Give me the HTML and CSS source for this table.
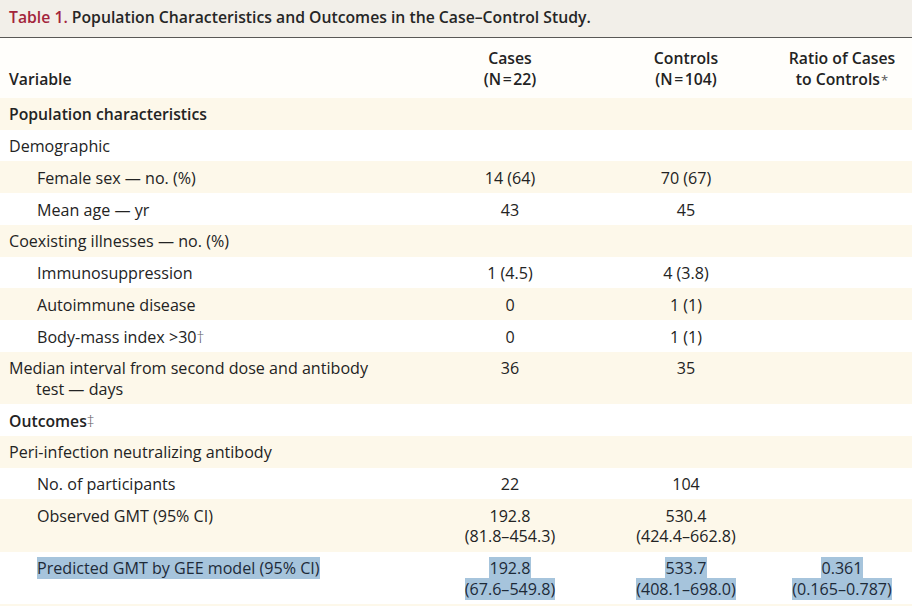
FILE: index.html
```html
<!DOCTYPE html>
<html lang="en">
<head>
<meta charset="utf-8">
<title>Table 1</title>
<link rel="stylesheet" href="styles.css">
</head>
<body>
<div class="page">
  <div class="title-bar"><span class="tnum">Table 1.</span> Population Characteristics and Outcomes in the Case–Control Study.</div>
  <table class="data">
    <colgroup>
      <col class="c-var"><col class="c-cases"><col class="c-ctrl"><col class="c-ratio">
    </colgroup>
    <thead>
      <tr>
        <th class="var">Variable</th>
        <th>Cases<br>(N&#8202;=&#8202;22)</th>
        <th>Controls<br>(N&#8202;=&#8202;104)</th>
        <th>Ratio of Cases<br>to Controls<span class="fn">*</span></th>
      </tr>
    </thead>
    <tbody>
      <tr class="cream"><td class="var l1 b">Population characteristics</td><td></td><td></td><td></td></tr>
      <tr><td class="var l1">Demographic</td><td></td><td></td><td></td></tr>
      <tr class="cream"><td class="var l2">Female sex — no. (%)</td><td>14 (64)</td><td>70 (67)</td><td></td></tr>
      <tr><td class="var l2">Mean age — yr</td><td>43</td><td>45</td><td></td></tr>
      <tr class="cream"><td class="var l1">Coexisting illnesses — no. (%)</td><td></td><td></td><td></td></tr>
      <tr><td class="var l2">Immunosuppression</td><td>1 (4.5)</td><td>4 (3.8)</td><td></td></tr>
      <tr class="cream"><td class="var l2">Autoimmune disease</td><td>0</td><td>1 (1)</td><td></td></tr>
      <tr><td class="var l2">Body-mass index &gt;30<span class="fn-s">†</span></td><td>0</td><td>1 (1)</td><td></td></tr>
      <tr class="cream"><td class="var l1 hang">Median interval from second dose and antibody<br>test — days</td><td>36</td><td>35</td><td></td></tr>
      <tr><td class="var l1 b">Outcomes<span class="fn-s">‡</span></td><td></td><td></td><td></td></tr>
      <tr class="cream"><td class="var l1">Peri-infection neutralizing antibody</td><td></td><td></td><td></td></tr>
      <tr><td class="var l2">No. of participants</td><td>22</td><td>104</td><td></td></tr>
      <tr class="cream"><td class="var l2">Observed GMT (95% CI)</td><td>192.8<br>(81.8–454.3)</td><td>530.4<br>(424.4–662.8)</td><td></td></tr>
      <tr><td class="var l2"><span class="sel">Predicted GMT by GEE model (95% CI)</span></td><td><span class="sel">192.8<br>(67.6–549.8)</span></td><td><span class="sel">533.7<br>(408.1–698.0)</span></td><td><span class="sel">0.361<br>(0.165–0.787)</span></td></tr>
      <tr class="cream tail"><td></td><td></td><td></td><td></td></tr>
    </tbody>
  </table>
</div>
</body>
</html>
```
FILE: styles.css
```css
* { box-sizing: border-box; }
html, body { margin: 0; padding: 0; background: #ffffff; }
body {
  font-family: "Open Sans", Lato, "Liberation Sans", sans-serif;
  font-size: 16.1px;
  color: #232323;
  width: 912px;
  height: 606px;
  overflow: hidden;
}
.title-bar {
  background: #f2efe9;
  height: 38px;
  padding: 7px 0 0 9px;
  line-height: 21px;
  font-size: 15.75px;
  font-weight: 600;
  color: #262626;
  border-bottom: 1px solid #5a5856;
}
.tnum { color: #a3243b; }
.data {
  width: 912px;
  border-collapse: collapse;
  table-layout: fixed;
}
.c-var { width: 420px; }
.c-cases { width: 180px; }
.c-ctrl { width: 172px; }
.c-ratio { width: 140px; }
th {
  font-weight: 600;
  font-size: 15.75px;
  text-align: center;
  vertical-align: bottom;
  line-height: 20.5px;
  padding: 10px 0 8.75px;
  background: #fffefb;
}
th.var { text-align: left; padding-left: 9px; }
.fn { font-size: 13px; line-height: 1; font-weight: 400; color: #555; margin-left: 1px; }
.fn-s { font-weight: 300; color: #555; }
td {
  text-align: center;
  vertical-align: top;
  line-height: 20.5px;
  padding: 6.5px 0 4.75px;
}
td.var { text-align: left; }
.l1 { padding-left: 9px; }
.l2 { padding-left: 37px; }
.hang { padding-left: 36px; text-indent: -27px; }
.b { font-weight: 600; font-size: 15.75px; }
tr.cream td { background: #fdf8ea; }
tr.tail td { height: 10px; padding: 0; }
.sel { background: #a6c4dc; color: #1d2a38; }
```
